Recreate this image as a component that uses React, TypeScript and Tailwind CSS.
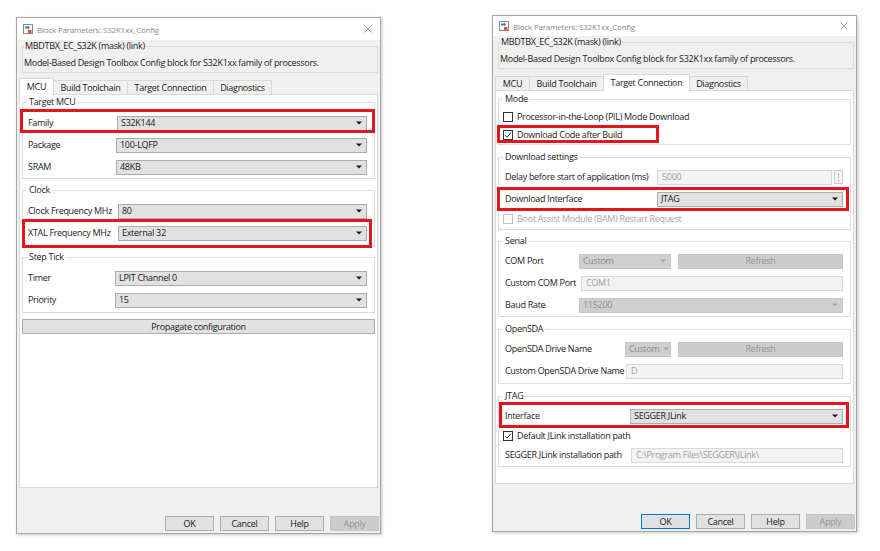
import React from 'react';

type Box = string;

function BlockIcon() {
  return (
    <svg width="10" height="10" viewBox="0 0 10 10" className="shrink-0">
      <rect x="0.5" y="0.5" width="9" height="9" fill="#fff" stroke="#8a8a8a" />
      <path d="M2 2.5h3v-1l2 2-2 2v-1H2z" fill="#3a76c4" />
      <rect x="5" y="6" width="3.5" height="3" fill="#e0521f" />
    </svg>
  );
}

function Arrow({ disabled }: { disabled?: boolean }) {
  return (
    <svg width="6" height="4" viewBox="0 0 6 4" className="shrink-0">
      <path d="M0 0.5h6L3 3.6z" fill={disabled ? '#a8a8a8' : '#1a1a1a'} />
    </svg>
  );
}

function Select({ value, disabled, className = '' }: { value: string; disabled?: boolean; className?: string }) {
  return (
    <div
      className={`flex h-[15px] items-center border pl-[3px] pr-[4px] ${
        disabled ? 'border-[#c8c8c8] bg-[#cfcfcf] text-[#8e8e8e]' : 'border-[#adadad] bg-[#e1e1e1] text-[#1a1a1a]'
      } ${className}`}
    >
      <span className="flex-1 whitespace-nowrap leading-[12px]">{value}</span>
      <Arrow disabled={disabled} />
    </div>
  );
}

function Input({ value, className = '' }: { value: string; className?: string }) {
  return (
    <div className={`flex h-[15px] items-center border border-[#d9d9d9] bg-[#f3f3f3] pl-[4px] text-[#a0a0a0] ${className}`}>
      <span className="whitespace-nowrap leading-[12px]">{value}</span>
    </div>
  );
}

function Btn({ label, disabled, focus, className = '' }: { label: string; disabled?: boolean; focus?: boolean; className?: string }) {
  return (
    <div
      className={`flex h-[15px] items-center justify-center whitespace-nowrap border leading-[12px] ${
        disabled
          ? 'border-[#c4c4c4] bg-[#cccccc] text-[#979797]'
          : focus
            ? 'border-[#0078d7] bg-[#e1e1e1] text-[#1a1a1a]'
            : 'border-[#adadad] bg-[#e1e1e1] text-[#1a1a1a]'
      } ${className}`}
    >
      {label}
    </div>
  );
}

function Check({ checked, disabled }: { checked?: boolean; disabled?: boolean }) {
  return (
    <div
      className={`flex h-[10px] w-[10px] shrink-0 items-center justify-center border bg-white ${
        disabled ? 'border-[#c2c2c2]' : 'border-[#333333]'
      }`}
    >
      {checked && (
        <svg width="8" height="8" viewBox="0 0 8 8">
          <path d="M1 4.2l2 2L7 1.6" fill="none" stroke="#333" strokeWidth="1" />
        </svg>
      )}
    </div>
  );
}

function RedBox({ box }: { box: Box }) {
  return <div className={`pointer-events-none absolute border-[3px] border-[#e5141d] ${box}`} />;
}

function Row({
  label,
  w,
  children,
  h = 'h-[22px]',
  box,
  pl = 'pl-[5px]',
}: {
  label: string;
  w: string;
  children: React.ReactNode;
  h?: string;
  box?: Box;
  pl?: string;
}) {
  return (
    <div className={`relative flex items-center ${h} ${pl} pr-[7px]`}>
      <span className={`${w} shrink-0 whitespace-nowrap leading-[12px]`}>{label}</span>
      <div className="flex flex-1 items-center">{children}</div>
      {box && <RedBox box={box} />}
    </div>
  );
}

function CheckRow({ label, checked, disabled, box, h = 'h-[18px]' }: { label: string; checked?: boolean; disabled?: boolean; box?: Box; h?: string }) {
  return (
    <div className={`relative flex items-center gap-[4px] pl-[4px] ${h} ${disabled ? 'text-[#a9a9a9]' : ''}`}>
      <Check checked={checked} disabled={disabled} />
      <span className="whitespace-nowrap leading-[12px]">{label}</span>
      {box && <RedBox box={box} />}
    </div>
  );
}

function Group({ title, children, className = '', pt = 'pt-[3px]', pb = 'pb-0' }: { title: string; children: React.ReactNode; className?: string; pt?: string; pb?: string }) {
  return (
    <fieldset className={`mx-[2px] border border-[#dcdcdc] ${className}`}>
      <legend className="ml-[4px] h-[12px] px-[2px] leading-[12px]">{title}</legend>
      <div className={`${pt} ${pb}`}>{children}</div>
    </fieldset>
  );
}

const TABS = [
  { name: 'MCU', w: 'w-[35px]' },
  { name: 'Build Toolchain', w: 'w-[75px]' },
  { name: 'Target Connection', w: 'w-[87px]' },
  { name: 'Diagnostics', w: 'w-[59px]' },
];

function Dialog({
  active,
  titleH,
  okFocus,
  className = '',
  children,
}: {
  active: number;
  titleH: string;
  okFocus?: boolean;
  className?: string;
  children: React.ReactNode;
}) {
  return (
    <div
      className={`flex h-[517px] w-[365px] shrink-0 flex-col border border-[#a6a6a6] bg-[#f0f0f0] shadow-[1px_1px_3px_rgba(0,0,0,0.22)] ${className}`}
    >
      <div className={`flex ${titleH} items-center bg-white pl-[6px] pr-[8px]`}>
        <BlockIcon />
        <span className="ml-[4px] flex-1 whitespace-nowrap text-[8px] leading-[11px] tracking-[-0.2px] text-[#8a8a8a]">
          Block Parameters: S32K1xx_Config
        </span>
        <svg width="8" height="8" viewBox="0 0 8 8">
          <path d="M0.5 0.5l7 7M7.5 0.5l-7 7" stroke="#9a9a9a" strokeWidth="0.9" />
        </svg>
      </div>
      <fieldset className="ml-[5px] mr-[2px] border border-[#dcdcdc] pb-[3px]">
        <legend className="ml-[1px] h-[12px] px-[1px] leading-[12px]">MBDTBX_EC_S32K (mask) (link)</legend>
        <div className="mt-[5px] h-[12px] whitespace-nowrap pl-[1px] leading-[12px]">
          Model-Based Design Toolbox Config block for S32K1xx family of processors.
        </div>
      </fieldset>
      <div className="mt-[5px] flex h-[16px] items-end pl-[2px]">
        {TABS.map((t, i) => (
          <div
            key={t.name}
            className={`${t.w} flex items-center justify-center whitespace-nowrap border-x border-t border-[#d9d9d9] leading-[12px] ${
              i > 0 ? '-ml-px' : ''
            } ${i === active ? 'relative z-10 -mb-px h-[17px] bg-white' : 'h-[14px] bg-[#f0f0f0]'}`}
          >
            {t.name}
          </div>
        ))}
      </div>
      <div className="mx-[2px] flex h-[394px] flex-col border border-[#d9d9d9] bg-white pt-px">{children}</div>
      <div className="mt-auto flex justify-end gap-[6px] pb-[2px] pr-[1px]">
        <Btn label="OK" focus={okFocus} className="w-[49px]" />
        <Btn label="Cancel" className="w-[49px]" />
        <Btn label="Help" className="w-[49px]" />
        <Btn label="Apply" disabled className="w-[49px]" />
      </div>
    </div>
  );
}

function McuDialog() {
  return (
    <Dialog active={0} titleH="h-[22px]" className="mt-[17px]">
      <Group title="Target MCU" pt="pt-[4px]">
        <Row label="Family" w="w-[89px]" box="-left-[3px] -right-px -top-[3px] bottom-px">
          <Select value="S32K144" className="flex-1" />
        </Row>
        <Row label="Package" w="w-[88px]">
          <Select value="100-LQFP" className="flex-1" />
        </Row>
        <Row label="SRAM" w="w-[88px]">
          <Select value="48KB" className="flex-1" />
        </Row>
      </Group>
      <Group title="Clock" className="mt-[5px]" pt="pt-[4px]" pb="pb-[2px]">
        <Row label="Clock Frequency MHz" w="w-[90px]">
          <Select value="80" className="flex-1" />
        </Row>
        <Row label="XTAL Frequency MHz" w="w-[90px]" box="-left-px right-[2px] -top-[3px] -bottom-[4px]">
          <Select value="External 32" className="flex-1" />
        </Row>
      </Group>
      <Group title="Step Tick" className="mt-[4px]" pt="pt-[4px]" pb="pb-px">
        <Row label="Timer" w="w-[87px]">
          <Select value="LPIT Channel 0" className="flex-1" />
        </Row>
        <Row label="Priority" w="w-[87px]">
          <Select value="15" className="flex-1" />
        </Row>
      </Group>
      <Btn label="Propagate configuration" className="mx-[2px] mt-[6px]" />
    </Dialog>
  );
}

function TargetDialog() {
  return (
    <Dialog active={2} titleH="h-[20px]" okFocus className="ml-[111px] mt-[15px]">
      <Group title="Mode" className="mt-px">
        <CheckRow label="Processor-in-the-Loop (PIL) Mode Download" />
        <CheckRow label="Download Code after Build" checked box="-left-[2px] w-[162px] -top-px bottom-px" />
      </Group>
      <Group title="Download settings" className="mt-[6px]" pb="pb-px">
        <Row label="Delay before start of application (ms)" w="w-[152px]" pl="pl-[6px]">
          <Input value="5000" className="flex-1" />
          <div className="ml-[2px] flex h-[14px] w-[9px] items-center justify-center border border-[#cfcfcf] bg-[#f3f3f3]">
            <svg width="3" height="9" viewBox="0 0 3 9">
              <rect x="1" y="0.5" width="1" height="1.5" fill="#9a9a9a" />
              <rect x="1" y="3.7" width="1" height="1.5" fill="#9a9a9a" />
              <rect x="1" y="7" width="1" height="1.5" fill="#9a9a9a" />
            </svg>
          </div>
        </Row>
        <Row label="Download Interface" w="w-[152px]" pl="pl-[6px]" box="-left-[2px] right-px -top-px -bottom-px">
          <Select value="JTAG" className="flex-1" />
        </Row>
        <CheckRow label="Boot Assist Module (BAM) Restart Request" disabled />
      </Group>
      <Group title="Serial" className="mt-[5px]">
        <Row label="COM Port" w="w-[74px]" pl="pl-[6px]">
          <Select value="Custom" disabled className="w-[92px]" />
          <Btn label="Refresh" disabled className="ml-[7px] flex-1" />
        </Row>
        <Row label="Custom COM Port" w="w-[76px]" pl="pl-[6px]">
          <Input value="COM1" className="flex-1" />
        </Row>
        <Row label="Baud Rate" w="w-[74px]" pl="pl-[6px]">
          <Select value="115200" disabled className="flex-1" />
        </Row>
      </Group>
      <Group title="OpenSDA" className="mt-[6px]" pb="pb-px">
        <Row label="OpenSDA Drive Name" w="w-[120px]" pl="pl-[6px]">
          <Select value="Custom" disabled className="w-[46px] gap-[3px] pl-[2px]" />
          <Btn label="Refresh" disabled className="ml-[7px] flex-1" />
        </Row>
        <Row label="Custom OpenSDA Drive Name" w="w-[121px]" pl="pl-[6px]">
          <Input value="D" className="flex-1" />
        </Row>
      </Group>
      <Group title="JTAG" className="mt-[6px]" pb="pb-px">
        <Row label="Interface" w="w-[125px]" pl="pl-[6px]" box="left-0 right-px -top-[3px] -bottom-px">
          <Select value="SEGGER JLink" className="flex-1" />
        </Row>
        <CheckRow label="Default JLink installation path" checked />
        <Row label="SEGGER JLink installation path" w="w-[126px]" pl="pl-[6px]" h="h-[20px]">
          <Input value="C:\Program Files\SEGGER\JLink\" className="flex-1" />
        </Row>
      </Group>
    </Dialog>
  );
}

export default function App() {
  return (
    <div className="flex h-[551px] w-[880px] items-start overflow-hidden bg-white pl-[16px] font-['Open_Sans','Noto_Sans',sans-serif] text-[9px] tracking-[-0.3px] text-[#222222]">
      <McuDialog />
      <TargetDialog />
    </div>
  );
}
